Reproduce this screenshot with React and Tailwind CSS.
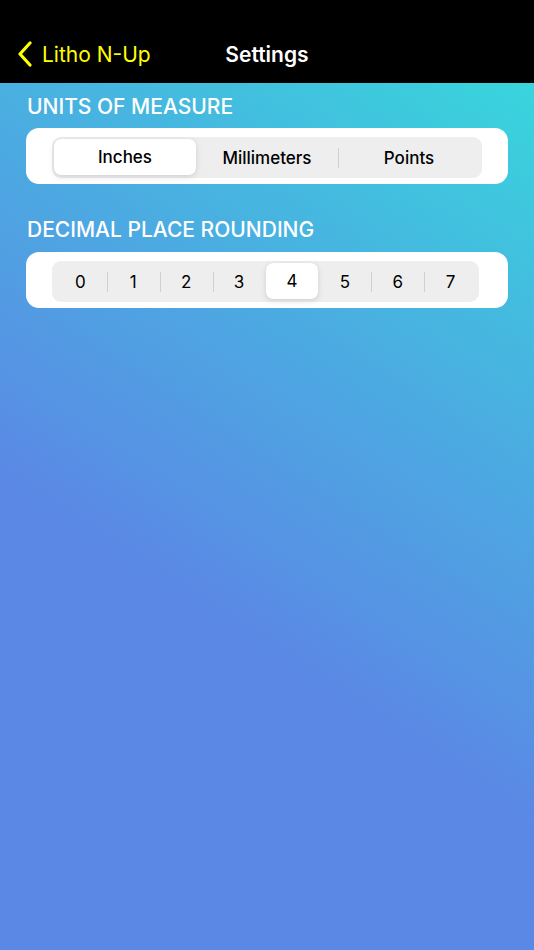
import React, { useState } from "react";

const units = ["Inches", "Millimeters", "Points"];
const places = ["0", "1", "2", "3", "4", "5", "6", "7"];

function Segmented({ items, selected, onSelect, bold }) {
  return (
    <div className="flex h-[41px] rounded-[9px] bg-[#eeeeef] p-[2px]">
      {items.map((item, i) => {
        const active = i === selected;
        // separator hidden next to the selected segment
        const showSep = i > 0 && i !== selected && i - 1 !== selected;
        return (
          <div key={item} className="relative flex flex-1">
            {i > 0 && (
              <div className={`absolute left-0 top-1/2 h-[20px] w-px -translate-y-1/2 ${showSep ? "bg-[#d0d0d3]" : "bg-transparent"}`} />
            )}
            <button
              onClick={() => onSelect(i)}
              className={`flex flex-1 items-center justify-center rounded-[7px] pt-[2px] text-[17px] text-black ${bold ? "font-medium" : ""} ${active ? "mb-[1px] bg-white shadow-[0_2px_6px_rgba(0,0,0,0.12),0_0_1px_rgba(0,0,0,0.1)]" : ""}`}
            >
              {item}
            </button>
          </div>
        );
      })}
    </div>
  );
}

export default function App() {
  const [unit, setUnit] = useState(0);
  const [place, setPlace] = useState(4);

  return (
    <div className="flex min-h-[950px] w-full flex-col bg-black" style={{ fontFamily: "Inter, 'Noto Sans', sans-serif" }}>
      {/* nav bar */}
      <div className="relative flex h-[83px] items-end bg-black pb-[13px]">
        <button className="flex items-center gap-[9px] pl-[17px] text-[21px] text-[#ffff00]">
          <svg width="16" height="26" viewBox="0 0 16 26" fill="none">
            <path d="M13 2 L3 13 L13 24" stroke="#ffff00" strokeWidth="3.2" strokeLinecap="round" strokeLinejoin="round" />
          </svg>
          <span>Litho N-Up</span>
        </button>
        <div className="pointer-events-none absolute bottom-[13px] left-0 right-0 text-center text-[21px] font-semibold text-white">
          Settings
        </div>
      </div>

      {/* content */}
      <div className="flex-1 bg-[linear-gradient(213deg,#38d5dc_0%,#4aaee1_30%,#5b87e5_62%,#5b87e5_100%)] px-[26px] pt-[12px]">
        <div className="pl-[1px] text-[21px] font-medium leading-[24px] text-white">UNITS OF MEASURE</div>
        <div className="mt-[9px] h-[56px] rounded-[13px] bg-white px-[26px] pt-[9px]">
          <Segmented items={units} selected={unit} onSelect={setUnit} bold />
        </div>

        <div className="mt-[34px] pl-[1px] text-[21px] font-medium leading-[24px] text-white">DECIMAL PLACE ROUNDING</div>
        <div className="mt-[10px] h-[56px] rounded-[13px] bg-white pl-[26px] pr-[29px] pt-[9px]">
          <Segmented items={places} selected={place} onSelect={setPlace} />
        </div>
      </div>
    </div>
  );
}
